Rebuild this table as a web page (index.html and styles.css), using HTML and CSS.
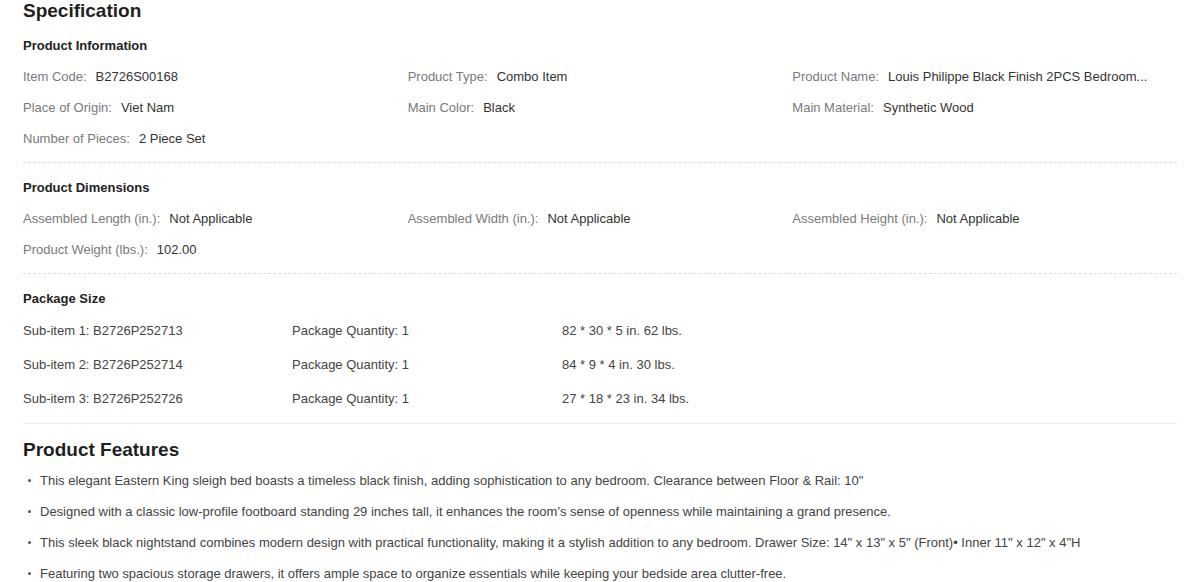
FILE: index.html
```html
<!DOCTYPE html>
<html lang="en">
<head>
<meta charset="utf-8">
<title>Specification</title>
<link rel="stylesheet" href="styles.css">
</head>
<body>
<main class="page">
  <h2 class="title">Specification</h2>

  <section class="spec-section spec-section--first">
    <h3 class="section-title">Product Information</h3>
    <div class="spec-grid">
      <div class="spec-item"><span class="label">Item Code:</span><span class="value">B2726S00168</span></div>
      <div class="spec-item"><span class="label">Product Type:</span><span class="value">Combo Item</span></div>
      <div class="spec-item"><span class="label">Product Name:</span><span class="value">Louis Philippe Black Finish 2PCS Bedroom...</span></div>
      <div class="spec-item"><span class="label">Place of Origin:</span><span class="value">Viet Nam</span></div>
      <div class="spec-item"><span class="label">Main Color:</span><span class="value">Black</span></div>
      <div class="spec-item"><span class="label">Main Material:</span><span class="value">Synthetic Wood</span></div>
      <div class="spec-item"><span class="label">Number of Pieces:</span><span class="value">2 Piece Set</span></div>
    </div>
  </section>

  <section class="spec-section">
    <h3 class="section-title">Product Dimensions</h3>
    <div class="spec-grid">
      <div class="spec-item"><span class="label">Assembled Length (in.):</span><span class="value">Not Applicable</span></div>
      <div class="spec-item"><span class="label">Assembled Width (in.):</span><span class="value">Not Applicable</span></div>
      <div class="spec-item"><span class="label">Assembled Height (in.):</span><span class="value">Not Applicable</span></div>
      <div class="spec-item"><span class="label">Product Weight (lbs.):</span><span class="value">102.00</span></div>
    </div>
  </section>

  <section class="spec-section spec-section--last">
    <h3 class="section-title">Package Size</h3>
    <div class="package-grid">
      <div class="pkg-cell">Sub-item 1: B2726P252713</div>
      <div class="pkg-cell">Package Quantity: 1</div>
      <div class="pkg-cell">82 * 30 * 5 in. 62 lbs.</div>
      <div class="pkg-cell">Sub-item 2: B2726P252714</div>
      <div class="pkg-cell">Package Quantity: 1</div>
      <div class="pkg-cell">84 * 9 * 4 in. 30 lbs.</div>
      <div class="pkg-cell">Sub-item 3: B2726P252726</div>
      <div class="pkg-cell">Package Quantity: 1</div>
      <div class="pkg-cell">27 * 18 * 23 in. 34 lbs.</div>
    </div>
  </section>

  <section class="features">
    <h2 class="title title--features">Product Features</h2>
    <ul class="feature-list">
      <li>This elegant Eastern King sleigh bed boasts a timeless black finish, adding sophistication to any bedroom. Clearance between Floor &amp; Rail: 10"</li>
      <li>Designed with a classic low-profile footboard standing 29 inches tall, it enhances the room's sense of openness while maintaining a grand presence.</li>
      <li>This sleek black nightstand combines modern design with practical functionality, making it a stylish addition to any bedroom. Drawer Size: 14" x 13" x 5" (Front)• Inner 11" x 12" x 4"H</li>
      <li>Featuring two spacious storage drawers, it offers ample space to organize essentials while keeping your bedside area clutter-free.</li>
    </ul>
  </section>
</main>
</body>
</html>
```

FILE: styles.css
```css
html, body {
  margin: 0;
  padding: 0;
  background: #ffffff;
}

body {
  font-family: "Liberation Sans", Arial, sans-serif;
  font-size: 13px;
  color: #333333;
}

.page {
  padding: 0 23px;
}

.title {
  margin: 0;
  font-size: 19px;
  line-height: 22px;
  font-weight: bold;
  color: #1f1f1f;
}

.spec-section {
  padding: 10px 0 8px;
  border-bottom: 1px dashed #dcdcdc;
}

.spec-section--first {
  padding-top: 9px;
}

.spec-section--last {
  padding-bottom: 7px;
  border-bottom: 1px solid #ececec;
}

.section-title {
  margin: 0;
  font-size: 13px;
  line-height: 30px;
  font-weight: bold;
  color: #222222;
}

.spec-grid {
  display: grid;
  grid-template-columns: repeat(3, 1fr);
}

.spec-item {
  line-height: 31px;
  white-space: nowrap;
  overflow: hidden;
}

.label {
  color: #7a7a7a;
}

.value {
  color: #333333;
  margin-left: 9px;
}

.package-grid {
  display: grid;
  grid-template-columns: 269px 270px 1fr;
}

.pkg-cell {
  line-height: 34px;
  color: #444444;
  white-space: nowrap;
}

.features {
  padding-top: 11px;
}

.title--features {
  line-height: 30px;
}

.feature-list {
  list-style: none;
  margin: 0;
  padding: 0;
}

.feature-list li {
  display: flex;
  align-items: center;
  gap: 9px;
  line-height: 31px;
  color: #444444;
  white-space: nowrap;
}

.feature-list li::before {
  content: "";
  flex: none;
  width: 3px;
  height: 3px;
  border-radius: 50%;
  background: #555555;
  margin-left: 5px;
}
```
